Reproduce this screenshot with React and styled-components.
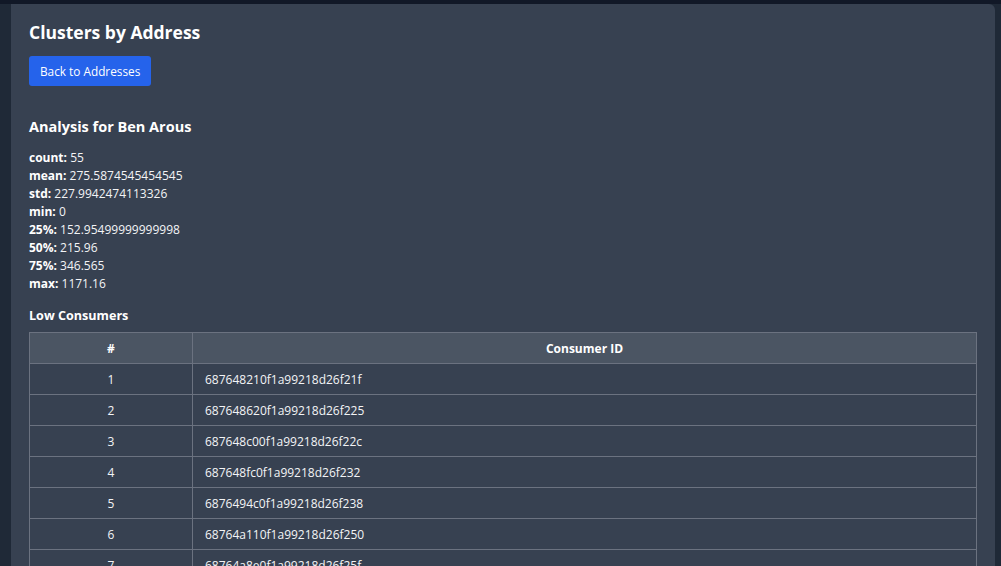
import React from "react";
import styled, { createGlobalStyle } from "styled-components";

const Global = createGlobalStyle`
  html, body { margin: 0; padding: 0; }
  body {
    background: #1f2937;
    font-family: "Open Sans", "Noto Sans", sans-serif;
    color: #f3f4f6;
  }
`;

const TopBar = styled.div`
  height: 4px;
  background: #111827;
`;

const Main = styled.main`
  padding: 0 6px 0 11px;
`;

const Card = styled.section`
  background: #374151;
  border-radius: 0 6px 0 0;
  padding: 14px 18px 40px 18px;
  min-height: 600px;
`;

const Title = styled.h1`
  margin: 0;
  font-size: 17.5px;
  line-height: 28px;
  font-weight: 700;
  color: #ffffff;
`;

const Button = styled.button`
  margin-top: 10px;
  height: 30px;
  padding: 0 11px;
  background: #2563eb;
  color: #ffffff;
  border: none;
  border-radius: 3px;
  font-family: inherit;
  font-size: 11.8px;
  cursor: pointer;
`;

const SubTitle = styled.h2`
  margin: 30px 0 0 0;
  font-size: 14.5px;
  line-height: 22px;
  font-weight: 700;
  color: #ffffff;
`;

const Stats = styled.div`
  margin-top: 11px;
`;

const StatLine = styled.div`
  font-size: 12px;
  line-height: 18px;
  color: #f3f4f6;
  b { font-weight: 700; color: #ffffff; }
`;

const SectionLabel = styled.h3`
  margin: 12px 0 0 0;
  font-size: 12.6px;
  line-height: 22px;
  font-weight: 700;
  color: #ffffff;
`;

const Table = styled.table`
  margin-top: 5px;
  width: 100%;
  border-collapse: collapse;
  font-size: 12px;
`;

const Th = styled.th`
  background: #4b5563;
  border: 1px solid #6b7280;
  height: 30px;
  padding: 0 12px;
  font-weight: 700;
  color: #ffffff;
  text-align: center;
  width: ${(p) => p.$w || "auto"};
`;

const Td = styled.td`
  border: 1px solid #6b7280;
  height: 30px;
  padding: 0 12px;
  color: #f3f4f6;
  text-align: ${(p) => (p.$center ? "center" : "left")};
`;

const stats = [
  ["count", "55"],
  ["mean", "275.5874545454545"],
  ["std", "227.9942474113326"],
  ["min", "0"],
  ["25%", "152.95499999999998"],
  ["50%", "215.96"],
  ["75%", "346.565"],
  ["max", "1171.16"],
];

const ids = [
  "687648210f1a99218d26f21f",
  "687648620f1a99218d26f225",
  "687648c00f1a99218d26f22c",
  "687648fc0f1a99218d26f232",
  "6876494c0f1a99218d26f238",
  "68764a110f1a99218d26f250",
  "68764a8e0f1a99218d26f25f",
  "68764b0a0f1a99218d26f26a",
];

export default function App() {
  return (
    <>
      <Global />
      <TopBar />
      <Main>
        <Card>
          <Title>Clusters by Address</Title>
          <Button>Back to Addresses</Button>
          <SubTitle>Analysis for Ben Arous</SubTitle>
          <Stats>
            {stats.map(([k, v]) => (
              <StatLine key={k}>
                <b>{k}:</b> {v}
              </StatLine>
            ))}
          </Stats>
          <SectionLabel>Low Consumers</SectionLabel>
          <Table>
            <thead>
              <tr>
                <Th $w="138px">#</Th>
                <Th>Consumer ID</Th>
              </tr>
            </thead>
            <tbody>
              {ids.map((id, i) => (
                <tr key={id}>
                  <Td $center>{i + 1}</Td>
                  <Td>{id}</Td>
                </tr>
              ))}
            </tbody>
          </Table>
        </Card>
      </Main>
    </>
  );
}
